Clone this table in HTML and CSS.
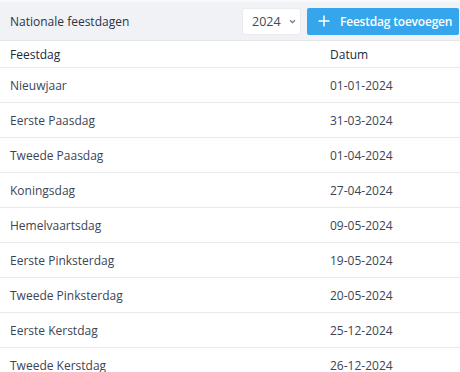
FILE: index.html
```html
<!DOCTYPE html>
<html lang="nl">
<head>
<meta charset="utf-8">
<title>Nationale feestdagen</title>
<link rel="stylesheet" href="styles.css">
</head>
<body>
<div class="page">
  <div class="toolbar">
    <div class="title">Nationale feestdagen</div>
    <div class="select">
      <span>2024</span>
      <svg class="chev" width="7" height="5" viewBox="0 0 7 5"><path d="M1 1.2 L3.5 3.6 L6 1.2" fill="none" stroke="#6b7380" stroke-width="1.2"/></svg>
    </div>
    <button class="add">
      <svg class="plus" width="12" height="12" viewBox="0 0 12 12"><path d="M6 0.5 V11.5 M0.5 6 H11.5" stroke="#fff" stroke-width="1.5"/></svg>
      <span>Feestdag toevoegen</span>
    </button>
  </div>
  <div class="table">
    <div class="row head"><div class="c name">Feestdag</div><div class="c date">Datum</div></div>
    <div class="row"><div class="c name">Nieuwjaar</div><div class="c date">01-01-2024</div></div>
    <div class="row"><div class="c name">Eerste Paasdag</div><div class="c date">31-03-2024</div></div>
    <div class="row"><div class="c name">Tweede Paasdag</div><div class="c date">01-04-2024</div></div>
    <div class="row"><div class="c name">Koningsdag</div><div class="c date">27-04-2024</div></div>
    <div class="row"><div class="c name">Hemelvaartsdag</div><div class="c date">09-05-2024</div></div>
    <div class="row"><div class="c name">Eerste Pinksterdag</div><div class="c date">19-05-2024</div></div>
    <div class="row"><div class="c name">Tweede Pinksterdag</div><div class="c date">20-05-2024</div></div>
    <div class="row"><div class="c name">Eerste Kerstdag</div><div class="c date">25-12-2024</div></div>
    <div class="row"><div class="c name">Tweede Kerstdag</div><div class="c date">26-12-2024</div></div>
  </div>
</div>
</body>
</html>
```
FILE: styles.css
```css
html, body {
  margin: 0;
  padding: 0;
  background: #ffffff;
}
body {
  font-family: "Open Sans", "Liberation Sans", sans-serif;
  font-size: 12px;
  color: #3b4555;
  overflow: hidden;
}
.page {
  width: 460px;
  border-top: 2px solid #f7f8fa;
}
.toolbar {
  height: 38px;
  display: flex;
  align-items: center;
  gap: 6px;
  padding: 0 1px 0 10px;
  background: #f1f2f6;
  border-bottom: 1px solid #e4e6ea;
}
.title {
  flex: 1;
  color: #2b3445;
}
.select {
  width: 59px;
  height: 27px;
  box-sizing: border-box;
  background: #fff;
  border: 1px solid #e9ebef;
  border-radius: 3px;
  display: flex;
  align-items: center;
  padding-left: 9px;
  gap: 8px;
  color: #424a57;
  font-size: 12.5px;
}
.chev {
  margin-top: 1px;
}
.add {
  width: 152px;
  height: 27px;
  border: none;
  border-radius: 2px;
  background: #35a6ec;
  color: #ffffff;
  font-family: "Open Sans", "Liberation Sans", sans-serif;
  font-size: 12px;
  font-weight: 600;
  letter-spacing: -0.2px;
  white-space: nowrap;
  display: flex;
  align-items: center;
  padding: 0 0 0 11px;
  gap: 10px;
}
.row {
  display: grid;
  grid-template-columns: 320px 1fr;
  height: 35px;
  box-sizing: border-box;
  border-bottom: 1px solid #e8e9ec;
  align-items: center;
}
.row.head {
  height: 27px;
  color: #222a38;
}
.c.name {
  padding-left: 10px;
}
.c.date {
  padding-left: 10px;
}
```
